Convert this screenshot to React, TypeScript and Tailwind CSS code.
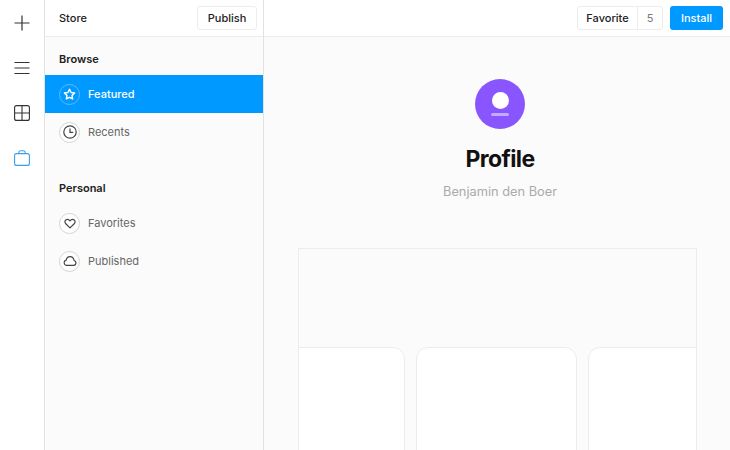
const railIcons = {
  plus: (
    <svg width="18" height="18" viewBox="0 0 18 18" fill="none" stroke="#333" strokeWidth="1.2">
      <path d="M9 1.5v15M1.5 9h15" />
    </svg>
  ),
  menu: (
    <svg width="16" height="14" viewBox="0 0 16 14" fill="none" stroke="#333" strokeWidth="1.1">
      <path d="M0.5 1.5h15M0.5 7h15M0.5 12.5h15" />
    </svg>
  ),
  grid: (
    <svg width="16" height="16" viewBox="0 0 16 16" fill="none" stroke="#333" strokeWidth="1.1">
      <rect x="0.6" y="0.6" width="14.8" height="14.8" rx="2" />
      <path d="M8 0.6v14.8M0.6 8h14.8" />
    </svg>
  ),
  bag: (
    <svg width="16" height="16" viewBox="0 0 16 16" fill="none" stroke="#3b9ff0" strokeWidth="1.1">
      <rect x="0.6" y="3.6" width="14.8" height="11.8" rx="2" />
      <path d="M4.8 3.6V2.4a1.6 1.6 0 0 1 1.6-1.6h3.2a1.6 1.6 0 0 1 1.6 1.6v1.2" />
    </svg>
  ),
};

const Star = () => (
  <svg width="13" height="13" viewBox="0 0 14 14" fill="none" stroke="white" strokeWidth="1.6" strokeLinejoin="round">
    <path d="M7 1.4l1.7 3.5 3.8.5-2.8 2.6.7 3.8L7 10l-3.4 1.8.7-3.8L1.5 5.4l3.8-.5z" />
  </svg>
);

const Clock = () => (
  <svg width="14" height="14" viewBox="0 0 14 14" fill="none" stroke="#444" strokeWidth="1.2">
    <circle cx="7" cy="7" r="6.2" />
    <path d="M7 3.4V7.4H10.2" />
  </svg>
);

const Heart = () => (
  <svg width="12" height="11" viewBox="0 0 14 13" fill="none" stroke="#444" strokeWidth="1.4" strokeLinejoin="round">
    <path d="M7 11.6L2 6.8C.6 5.4.7 3.4 2 2.3c1.4-1.1 3.5-.9 5 1 1.5-1.9 3.6-2.1 5-1 1.3 1.1 1.4 3.1 0 4.5z" />
  </svg>
);

const Cloud = () => (
  <svg width="14" height="10" viewBox="0 0 15 11" fill="none" stroke="#444" strokeWidth="1.3" strokeLinejoin="round">
    <path d="M4 10.4h7.4a2.8 2.8 0 0 0 .6-5.5C11.5 2.4 9.7.7 7.5.7 5.4.7 3.7 2.3 3.3 4.5A3 3 0 0 0 4 10.4z" />
  </svg>
);

const NavItem = ({ label, icon, active }: { label: string; icon: React.ReactNode; active?: boolean }) => (
  <div className={`flex h-[38px] items-center gap-[8px] pl-[14px] ${active ? "bg-[#0099ff]" : ""}`}>
    <span
      className={`flex h-[21px] w-[21px] items-center justify-center rounded-full border ${
        active ? "border-[#5cbcff]" : "border-[#d4d4d4] bg-white"
      }`}
    >
      {icon}
    </span>
    <span className={`pt-[1px] text-[11px] ${active ? "font-medium text-white" : "font-normal text-[#666]"}`}>{label}</span>
  </div>
);

const App = () => {
  return (
    <div className="flex h-[450px] w-[730px] overflow-hidden bg-white font-['Inter',sans-serif]">
      <div className="flex w-[45px] flex-none flex-col items-center gap-[27px] border-r border-[#e2e2e2] pt-[14px]">
        <div className="flex h-[18px] items-center">{railIcons.plus}</div>
        <div className="flex h-[18px] items-center">{railIcons.menu}</div>
        <div className="flex h-[18px] items-center">{railIcons.grid}</div>
        <div className="flex h-[18px] items-center">{railIcons.bag}</div>
      </div>

      <div className="flex w-[219px] flex-none flex-col border-r border-[#e2e2e2] bg-[#fbfbfb]">
        <div className="flex h-[37px] flex-none items-center justify-between border-b border-[#ededed] bg-white pl-[14px] pr-[6px]">
          <span className="text-[11px] font-medium text-[#222]">Store</span>
          <button className="h-[24px] w-[60px] rounded-[3px] border border-[#ededed] bg-white text-[11px] font-medium text-[#222]">
            Publish
          </button>
        </div>
        <div className="pl-[14px] pt-[15px] text-[11px] font-semibold leading-[14px] text-[#222]">Browse</div>
        <div className="mt-[9px]">
          <NavItem label="Featured" icon={<Star />} active />
          <NavItem label="Recents" icon={<Clock />} />
        </div>
        <div className="mt-[30px] pl-[14px] text-[11px] font-semibold leading-[14px] text-[#222]">Personal</div>
        <div className="mt-[9px]">
          <NavItem label="Favorites" icon={<Heart />} />
          <NavItem label="Published" icon={<Cloud />} />
        </div>
      </div>

      <div className="flex min-w-0 flex-1 flex-col bg-[#fbfbfb]">
        <div className="flex h-[37px] flex-none items-center justify-end gap-[7px] border-b border-[#ededed] bg-white pr-[7px]">
          <div className="flex h-[24px] items-center rounded-[3px] border border-[#ededed] text-[11px] font-medium">
            <span className="flex h-full w-[59px] items-center justify-center text-[#222]">Favorite</span>
            <span className="flex h-full w-[25px] items-center justify-center border-l border-[#ededed] font-normal text-[#777]">
              5
            </span>
          </div>
          <button className="h-[24px] w-[53px] rounded-[3px] bg-[#0099ff] text-[11px] font-medium text-white">
            Install
          </button>
        </div>

        <div className="flex min-h-0 flex-1 flex-col items-center pt-[42px]">
          <div className="flex flex-col items-center pl-[6px]">
            <div className="flex h-[50px] w-[50px] flex-none flex-col items-center rounded-full bg-[#8855ff] pt-[13px]">
              <span className="h-[17px] w-[17px] rounded-full bg-white" />
              <span className="mt-[4px] h-[3px] w-[18px] rounded-full bg-[#c4aaff]" />
            </div>
            <h1 className="mt-[15px] text-[23px] font-bold leading-[30px] tracking-[-0.6px] text-[#111]">Profile</h1>
            <p className="mt-[10px] text-[12.8px] leading-[16px] text-[#aaa]">Benjamin den Boer</p>
          </div>

          <div className="mt-[48px] flex min-h-0 w-[399px] flex-1 items-start justify-center gap-[11px] overflow-hidden border-x border-t border-[#ececec] pr-[2px] pt-[98px]">
            <div className="h-[200px] w-[161px] flex-none rounded-[12px] border border-[#ececec] bg-white" />
            <div className="h-[200px] w-[161px] flex-none rounded-[12px] border border-[#ececec] bg-white" />
            <div className="h-[200px] w-[161px] flex-none rounded-[12px] border border-[#ececec] bg-white" />
          </div>
        </div>
      </div>
    </div>
  );
};

export default App;
